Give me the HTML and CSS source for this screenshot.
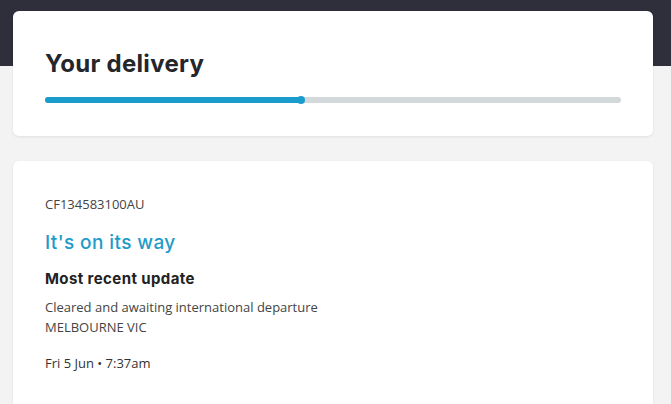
FILE: index.html
```html
<!DOCTYPE html>
<html lang="en">
<head>
<meta charset="utf-8">
<title>Your delivery</title>
<link rel="stylesheet" href="styles.css">
</head>
<body>
<div class="header"></div>
<main class="page">
  <section class="card summary">
    <h1 class="title">Your delivery</h1>
    <div class="progress">
      <div class="progress-fill" style="width: 44.9%"></div>
    </div>
  </section>
  <section class="card details">
    <p class="tracking">CF134583100AU</p>
    <h2 class="status">It's on its way</h2>
    <h3 class="update-title">Most recent update</h3>
    <p class="update-text">Cleared and awaiting international departure<br>MELBOURNE VIC</p>
    <p class="update-time">Fri 5 Jun • 7:37am</p>
  </section>
</main>
</body>
</html>
```

FILE: styles.css
```css
* { box-sizing: border-box; }
html, body { margin: 0; padding: 0; }
body {
  background: #f3f3f3;
  font-family: "Open Sans", "Liberation Sans", sans-serif;
  color: #333;
  overflow: hidden;
  height: 404px;
}
.header {
  height: 66px;
  background: #2f2f3c;
}
.page {
  margin-top: -55px;
  padding: 0 18px 0 13px;
  display: flex;
  flex-direction: column;
  gap: 25px;
}
.card {
  background: #fff;
  border-radius: 6px;
  box-shadow: 0 1px 3px rgba(0,0,0,0.08);
}
.summary {
  height: 125px;
  padding: 38px 32px 0 32px;
}
.title {
  margin: 0;
  font-family: Inter, sans-serif;
  font-weight: 700;
  font-size: 24px;
  letter-spacing: 0.3px;
  line-height: 30px;
  color: #25262b;
}
.progress {
  margin-top: 18px;
  height: 6px;
  background: #d3d8da;
  border-radius: 3px;
  position: relative;
}
.progress-fill {
  height: 6px;
  background: #1a9ccc;
  border-radius: 3px;
  position: relative;
}
.progress-fill::after {
  content: "";
  position: absolute;
  right: -1px;
  top: -1px;
  width: 8px;
  height: 8px;
  border-radius: 50%;
  background: #1a9ccc;
}
.details {
  height: 260px;
  padding: 34px 32px 0 32px;
}
.tracking {
  margin: 0;
  font-size: 13px;
  line-height: 18px;
  color: #444;
}
.status {
  margin: 18px 0 0 0;
  font-family: Inter, sans-serif;
  font-weight: 500;
  font-size: 19px;
  letter-spacing: 0.4px;
  line-height: 24px;
  color: #1f9bc9;
}
.update-title {
  margin: 14px 0 0 0;
  font-family: Inter, sans-serif;
  font-weight: 700;
  font-size: 15px;
  letter-spacing: 0.4px;
  line-height: 20px;
  color: #222;
}
.update-text {
  margin: 8px 0 0 0;
  font-size: 13px;
  line-height: 20px;
  color: #444;
}
.update-time {
  margin: 16px 0 0 0;
  font-size: 13px;
  line-height: 20px;
  color: #333;
}
```
